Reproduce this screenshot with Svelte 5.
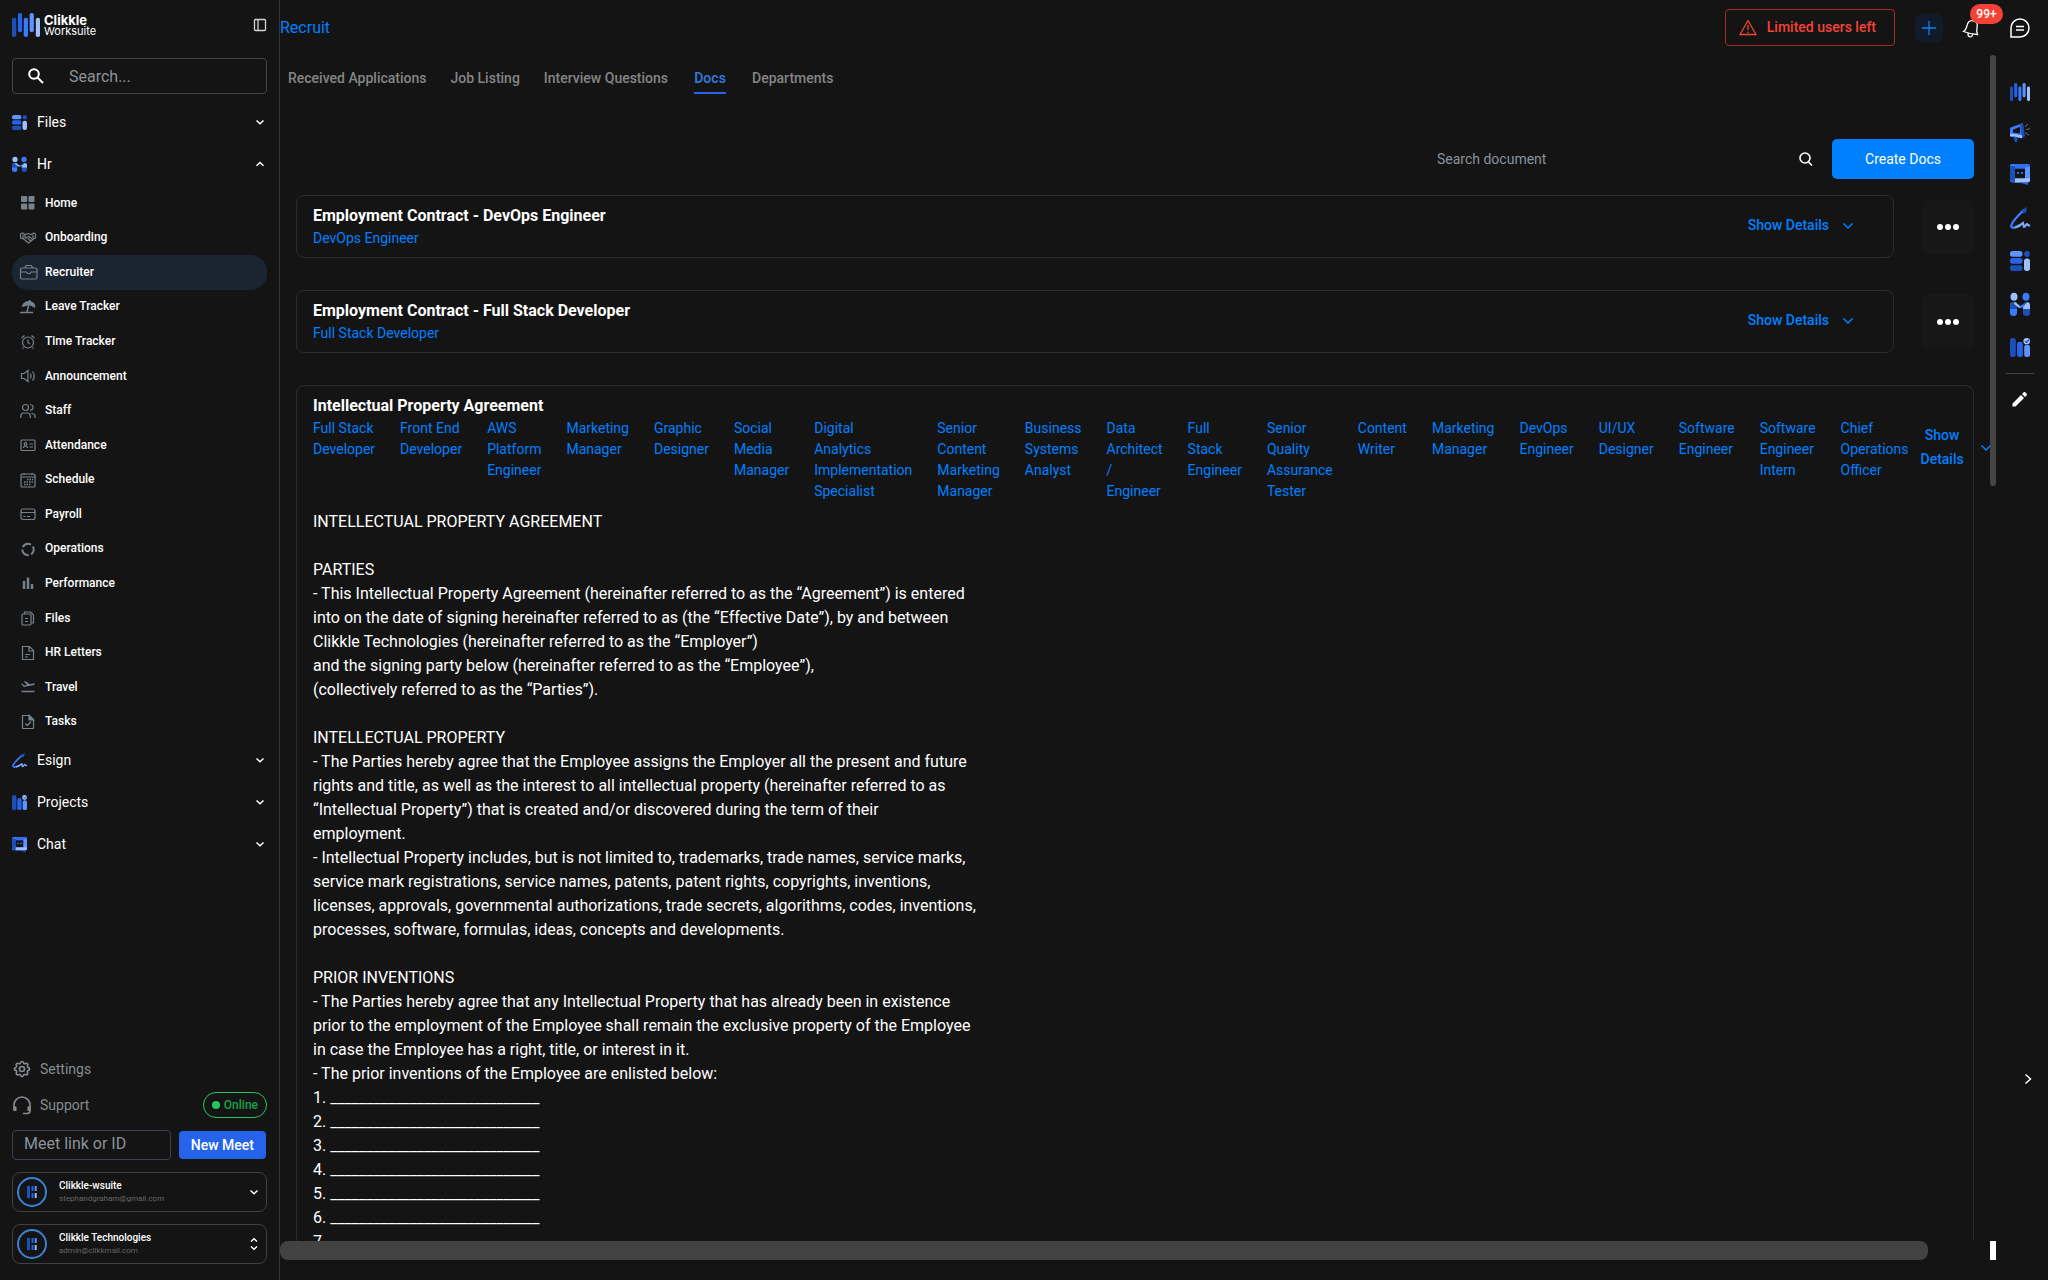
<script>
  const hrItems = [
    ['Home', 'home'], ['Onboarding', 'handshake'], ['Recruiter', 'case'], ['Leave Tracker', 'beach'],
    ['Time Tracker', 'alarm'], ['Announcement', 'speaker'], ['Staff', 'users'], ['Attendance', 'idcard'],
    ['Schedule', 'calendar'], ['Payroll', 'card'], ['Operations', 'ring'], ['Performance', 'bars'],
    ['Files', 'files'], ['HR Letters', 'letter'], ['Travel', 'plane'], ['Tasks', 'task'],
  ];
  const lowerGroups = [['Esign', 'esign'], ['Projects', 'projects'], ['Chat', 'chat']];
  const tabs = ['Received Applications', 'Job Listing', 'Interview Questions', 'Docs', 'Departments'];
  const docs = [
    ['Employment Contract - DevOps Engineer', 'DevOps Engineer'],
    ['Employment Contract - Full Stack Developer', 'Full Stack Developer'],
  ];
  const roles = [
    'Full\u00a0Stack Developer', 'Front\u00a0End Developer', 'AWS Platform Engineer', 'Marketing Manager',
    'Graphic Designer', 'Social Media Manager', 'Digital Analytics Implementation Specialist',
    'Senior Content Marketing Manager', 'Business Systems Analyst', 'Data Architect / Engineer',
    'Full Stack Engineer', 'Senior Quality Assurance Tester', 'Content Writer', 'Marketing Manager',
    'DevOps Engineer', 'UI/UX Designer', 'Software Engineer', 'Software Engineer Intern',
    'Chief Operations Officer',
  ];
  const apps = [
    ['Worksuite', 'logo', 18], ['Campaigns', 'megaphone', 19], ['Chat', 'chat', 21], ['Esign', 'esign', 22],
    ['Files', 'stack', 20], ['Hr', 'hr', 23], ['Projects', 'projects', 19],
  ];
  const accounts = [
    ['Clikkle-wsuite', 'stephandgraham@gmail.com', 'down'],
    ['Clikkle Technologies', 'admin@clikkmail.com', 'updown'],
  ];
  const blank = '_'.repeat(29);
  const agreement = `INTELLECTUAL PROPERTY AGREEMENT

PARTIES
- This Intellectual Property Agreement (hereinafter referred to as the “Agreement”) is entered
into on the date of signing hereinafter referred to as (the “Effective Date”), by and between
Clikkle Technologies (hereinafter referred to as the “Employer”)
and the signing party below (hereinafter referred to as the “Employee”),
(collectively referred to as the “Parties”).

INTELLECTUAL PROPERTY
- The Parties hereby agree that the Employee assigns the Employer all the present and future
rights and title, as well as the interest to all intellectual property (hereinafter referred to as
“Intellectual Property”) that is created and/or discovered during the term of their
employment.
- Intellectual Property includes, but is not limited to, trademarks, trade names, service marks,
service mark registrations, service names, patents, patent rights, copyrights, inventions,
licenses, approvals, governmental authorizations, trade secrets, algorithms, codes, inventions,
processes, software, formulas, ideas, concepts and developments.

PRIOR INVENTIONS
- The Parties hereby agree that any Intellectual Property that has already been in existence
prior to the employment of the Employee shall remain the exclusive property of the Employee
in case the Employee has a right, title, or interest in it.
- The prior inventions of the Employee are enlisted below:
${[1, 2, 3, 4, 5, 6, 7, 8].map((n) => `${n}. ${blank}`).join('\n')}`;
</script>

{#snippet brand(name, w, h)}
  <svg width={w} height={h} viewBox="0 0 20 20" preserveAspectRatio="none" aria-hidden="true">
    {#if name === 'logo'}
      <rect x="0" y="4" width="3" height="16" rx="1.5" fill="#1d4fb8" />
      <rect x="4.2" y="0" width="3" height="16" rx="1.5" fill="#2563eb" />
      <rect x="8.4" y="4" width="3" height="16" rx="1.5" fill="#3b7bff" />
      <rect x="12.6" y="0" width="3" height="16" rx="1.5" fill="#5e94ff" />
      <rect x="17" y="4" width="3" height="16" rx="1.5" fill="#9fc0ff" />
    {:else if name === 'megaphone'}
      <path d="M0 5L13 0v15L0 14z" fill="#3b7bff" />
      <path d="M10 1l3-1 2 14-3 2z" fill="#1d4fb8" />
      <path d="M0 11l12 2v3L0 14z" fill="#9fc0ff" />
      <path d="M3 7l7-3v7L3 10z" fill="#141414" />
      <path d="M3 14l5 1-1 5H5z" fill="#1d4fb8" />
      <path d="M15 4l3-3M16 7l4-1M15 10l4 3" stroke="#63708a" stroke-width="1" />
    {:else if name === 'chat'}
      <rect width="20" height="17.5" rx="2" fill="#3b7bff" />
      <path d="M0 2h5v15H2l-2-2z" fill="#1d4fb8" />
      <path d="M5 0h13l2 2v3H5z" fill="#2f6df2" />
      <path d="M15 3h5v14h-5z" fill="#5e94ff" />
      <path d="M5 13.5h15v2L18 17.5H5z" fill="#9fc0ff" />
      <path d="M9 17.5h9V20z" fill="#2563eb" />
      <rect x="5" y="4.5" width="10" height="9" fill="#141414" />
      <path d="M7 8.500h2M11 8.500h2" stroke="#3b7bff" stroke-width="1.600" />
    {:else if name === 'esign'}
      <path d="M14 2.500C8 8 2 13 1.200 17c0 3 5 1.800 9-.500" fill="none" stroke="#3b7bff" stroke-width="2.200" />
      <path d="M12 3l5-3-1 5-3 1z" fill="#1d4fb8" />
      <path d="M5 18.500c4-.500 6-3 8-4l1 3.500c2 0 2-3 3-2.500s1 2 3 1" fill="none" stroke="#82acff" stroke-width="2" />
    {:else if name === 'stack'}
      <rect width="12.500" height="5.800" rx="2.500" fill="#5e94ff" />
      <rect y="7" width="12.500" height="5.800" rx="2.500" fill="#2563eb" />
      <rect y="14.200" width="12.500" height="5.800" rx="2.500" fill="#1d4fb8" />
      <circle cx="17" cy="3" r="2.900" fill="#1d4fb8" />
      <rect x="14" y="7.500" width="6" height="12.500" rx="2.700" fill="#9fc0ff" />
    {:else if name === 'hr'}
      <circle cx="4" cy="3.300" r="3.500" fill="#9fc0ff" />
      <circle cx="16" cy="3.300" r="3.500" fill="#3b7bff" />
      <rect x="0" y="8" width="7" height="12" rx="3" fill="#3b7bff" />
      <path d="M0 14v-4q0-2 3-2l4 4v2z" fill="#1d4fb8" />
      <rect x="13" y="8" width="7" height="12" rx="3" fill="#1d4fb8" />
      <path d="M13 14v-2l4-4q3 0 3 3v3z" fill="#9fc0ff" />
      <path d="M4.500 8.500l5.500 4" stroke="#9fc0ff" stroke-width="2" />
      <path d="M10 12.500l4-2" stroke="#3b7bff" stroke-width="2" />
    {:else if name === 'projects'}
      <rect width="5.800" height="20" rx="2.500" fill="#1d4fb8" />
      <rect x="7" y="4" width="5.800" height="16" rx="2.500" fill="#2563eb" />
      <rect x="14.200" y="7" width="5.800" height="13" rx="2.500" fill="#5e94ff" />
      <circle cx="16.700" cy="3.300" r="3.300" fill="#9fc0ff" />
      <path d="M15 3.200l1.500 1.500 2.500-3" fill="none" stroke="#1d4fb8" stroke-width="1.200" />
    {/if}
  </svg>
{/snippet}

{#snippet glyph(name)}
  <svg class="glyph" width="16" height="16" viewBox="0 0 16 16" fill="none" stroke="currentColor" stroke-width="1.2" aria-hidden="true">
    {#if name === 'home'}
      <g fill="currentColor" stroke="none"><rect x="1" y="1" width="6.200" height="6" rx="1" /><rect x="8.500" y="1" width="6" height="6" rx="1" /><rect x="1" y="8.500" width="6.200" height="6" rx="1" /><rect x="8.500" y="8.500" width="6" height="6" rx="1" /></g>
    {:else if name === 'handshake'}
      <path d="M.5 4l2-1 2 1.500L8 3.500l3.500 1L13.500 3l2 1v4l-2 1-5 4-5-4-3-1z M5 5v3c2 1 3-2 4-1.500L12 9 M5 10l2 2M8 8.500l2.500 2.500M3 5v3.500M13 5v3.500" />
    {:else if name === 'case'}
      <rect x=".5" y="4" width="16.500" height="11" rx="1.500" /><path d="M5 4l1-2.500h5.500l1 2.500M.5 8h6l1 1.500h2.500l1-1.500h6" />
    {:else if name === 'beach'}
      <path d="M2 8C2 4 6 1.500 10 2c4 1 6 4 5 7l-3.500-2-3-1L6 7z" fill="currentColor" stroke="none" /><path d="M10 1L7 13M0 13.500h13" stroke-width="1.500" />
    {:else if name === 'alarm'}
      <circle cx="8" cy="8.500" r="5.500" /><path d="M8 5.500v3.200L10 10M1.500 4l3-2.500M14.500 4l-3-2.500M3.500 13.500l-1 1M12.500 13.500l1 1" />
    {:else if name === 'speaker'}
      <path d="M1.500 5.500h2.500L8 2.500v11l-4-3H1.500zM10.500 5.500q1.500 2.500 0 5M12.500 3.500q3.500 4.500 0 9" />
    {:else if name === 'users'}
      <circle cx="5.500" cy="4.500" r="3" /><path d="M.8 15v-2q0-3 3-3h3.500q3 0 3 3v2M10 1.500q3.500.500 3 3.500-.500 2-3 2.500M11.500 10.500q3.500 0 3.500 3V15" />
    {:else if name === 'idcard'}
      <rect x="1" y="3" width="14" height="10.500" rx="1" /><circle cx="5.500" cy="7" r="1.300" /><path d="M3.500 11q0-2 2-2t2 2M9.500 7h3.500M9.500 10h3.500" />
    {:else if name === 'calendar'}
      <rect x="1" y="2" width="14" height="13" rx="1" /><path d="M1 5h14M4 1v2M12 1v2" /><path d="M7 7.500h6M4 10h9M4 12.500h7" stroke-dasharray="1.500 1" stroke-width="1.500" />
    {:else if name === 'card'}
      <rect x="1" y="3" width="14" height="10.500" rx="2" /><path d="M1 6.500h14M3.500 10.500h2M7 10.500h3" />
    {:else if name === 'ring'}
      <circle cx="8" cy="8.500" r="5.700" stroke-width="2" stroke-dasharray="9.500 2.430" stroke-dashoffset="4" />
    {:else if name === 'bars'}
      <path d="M4 6v8M8 2.500V14M12 9v5" stroke-width="2.500" />
    {:else if name === 'files'}
      <rect x="2" y="4" width="9" height="11" rx="1" /><path d="M4.500 4V2h6L13.500 5v8h-2M5 8.500h3M5 11.500h3" />
    {:else if name === 'letter'}
      <path d="M2.500 1.500h7l4 4v9h-11zM9 1.500v4.500h4.500M5 9.500h5M5 12h3" />
    {:else if name === 'plane'}
      <path d="M1 5l3 3 10-2c2-1 0-2-1-1.500l-3 .800L5 2 4 2.500l3 3.500-2.500.500L2 4.500z" fill="currentColor" stroke="none" /><path d="M1.500 12.500h13" stroke-width="1.500" />
    {:else if name === 'task'}
      <path d="M2.500 1.500h7l4 4v9h-11zM5.500 9.500l2 2 3.500-4" /><path d="M9 1.500v4.500h4.500z" fill="currentColor" />
    {/if}
  </svg>
{/snippet}

{#snippet chevron(dir)}
  <svg width="12" height="12" viewBox="0 0 12 12" fill="none" stroke="currentColor" stroke-width="1.500" aria-hidden="true">
    {#if dir === 'down'}<path d="M2.500 4.500L6 7.800l3.500-3.300" />
    {:else if dir === 'down-wide'}<path d="M1.500 4.500L6 9l4.500-4.500" />
    {:else if dir === 'up'}<path d="M2.500 7.800L6 4.500l3.500 3.300" />
    {:else if dir === 'right'}<path d="M3.500 1.500L8.500 6l-5 4.500" />
    {:else}<path d="M3 3.500L6 .800l3 2.700M3 8.500l3 2.700 3-2.700" />{/if}
  </svg>
{/snippet}

{#snippet group(label, icon, open)}
  <button class="group" aria-expanded={open}>
    {@render brand(icon, 15, 15)}
    <span>{label}</span>
    {@render chevron(open ? 'up' : 'down')}
  </button>
{/snippet}

<div class="app">
  <aside>
    <div class="top">
      <div class="logo">
        {@render brand('logo', 28, 24)}
        <div class="wordmark"><b>Clikkle</b><span>Worksuite</span></div>
      </div>
      <button class="plain" aria-label="Toggle sidebar">
        <svg width="14" height="14" viewBox="0 0 14 14" fill="none" stroke="#d4d4d4" stroke-width="1.300"><rect x="1.500" y="1.500" width="11" height="11" rx="1" /><path d="M5 1.500v11" /></svg>
      </button>
    </div>
    <label class="search">
      <svg width="18" height="18" viewBox="0 0 18 18" fill="none" stroke="#fff" stroke-width="2" aria-hidden="true"><circle cx="7" cy="7" r="4.800" /><path d="M10.500 10.500l5.500 5.500" /></svg>
      <input type="search" placeholder="Search..." aria-label="Search" />
    </label>
    <nav aria-label="Apps">
      {@render group('Files', 'stack', false)}
      {@render group('Hr', 'hr', true)}
      <ul>
        {#each hrItems as [label, icon]}
          <li><a href="#{icon}" class:active={label === 'Recruiter'}>{@render glyph(icon)}{label}</a></li>
        {/each}
      </ul>
      {#each lowerGroups as [label, icon]}
        {@render group(label, icon, false)}
      {/each}
    </nav>
    <div class="bottom">
      <a class="util settings" href="#settings">
        <svg width="20" height="20" viewBox="0 0 24 24" fill="none" stroke="currentColor" stroke-width="2"><path d="M10.300 4.300c.400-1.800 3-1.800 3.400 0a1.700 1.700 0 0 0 2.600 1.100c1.500-.900 3.300.800 2.400 2.400a1.700 1.700 0 0 0 1 2.500c1.800.400 1.800 3 0 3.400a1.700 1.700 0 0 0-1 2.600c.900 1.500-.900 3.300-2.400 2.400a1.700 1.700 0 0 0-2.600 1c-.400 1.800-3 1.800-3.400 0a1.700 1.700 0 0 0-2.600-1c-1.500.900-3.300-.900-2.400-2.400a1.700 1.700 0 0 0-1-2.600c-1.800-.400-1.800-3 0-3.400a1.700 1.700 0 0 0 1-2.500c-.900-1.600.900-3.300 2.400-2.400 1 .600 2.300.100 2.600-1.100z" /><circle cx="12" cy="12" r="3" /></svg>
        Settings
      </a>
      <div class="support">
        <a class="util" href="#support">
          <svg width="20" height="20" viewBox="0 0 20 20" fill="none" stroke="currentColor" stroke-width="1.600"><path d="M2 15V10a8 8 0 0 1 16 0v6q0 2.500-3 2.500h-4" /><path d="M3 11.500v4.500M17 11.500v4.500" stroke-width="3" /></svg>
          Support
        </a>
        <span class="online"><i></i>Online</span>
      </div>
      <div class="meet">
        <input type="text" placeholder="Meet link or ID" aria-label="Meet link or ID" />
        <button>New Meet</button>
      </div>
      {#each accounts as [name, mail, dir]}
        <button class="account">
          <span class="avatar">
            <svg width="10" height="12" viewBox="0 0 10 12"><path d="M1.500 0v12" stroke="#1d4fb8" stroke-width="3" /><path d="M5.500 0v5M5.500 7v5" stroke="#2563eb" stroke-width="2" /><path d="M8.700 0v5" stroke="#5e94ff" stroke-width="2" /><path d="M8.700 7v5" stroke="#9fc0ff" stroke-width="2" /></svg>
          </span>
          <span class="who"><b>{name}</b><small>{mail}</small></span>
          {@render chevron(dir)}
        </button>
      {/each}
    </div>
  </aside>

  <div class="main">
    <header>
      <a class="crumb" href="#recruit">Recruit</a>
      <button class="limit">
        <svg width="18" height="17" viewBox="0 0 18 17" fill="none" stroke="currentColor" stroke-width="1.300"><path d="M9 1.500L1 15.500h16zM9 6v5M9 12.500v1.500" /></svg>
        Limited users left
      </button>
      <button class="plus" aria-label="Add"><svg width="16" height="16" viewBox="0 0 16 16" stroke="#0a80ff" stroke-width="1.300"><path d="M8 1v14M1 8h14" /></svg></button>
      <button class="plain bell" aria-label="Notifications">
        <svg width="18" height="20" viewBox="0 0 18 20" fill="none" stroke="#fff" stroke-width="1.300"><path d="M1.500 13.500Q4 12 4.800 8.500 6 2 11 2.800q5.500 1 4 6.700-.800 3.500.500 7-7-.300-14-3zM6 15.500q-.300 3 2 3.300 2 .200 2.800-2.200" /></svg>
        <span class="badge">99+</span>
      </button>
      <button class="plain" aria-label="Messages">
        <svg width="20" height="20" viewBox="0 0 20 20" fill="none" stroke="#fff" stroke-width="1.500"><path d="M1 19v-9a9 9 0 1 1 9 9zM6 8.500h8M6 12h8" /></svg>
      </button>
    </header>

    <div class="body">
      <div class="scroller">
        <nav class="tabs" aria-label="Recruit sections">
          {#each tabs as tab}
            <a href="#{tab}" class:current={tab === 'Docs'}><span>{tab}</span></a>
          {/each}
        </nav>
        <main>
          <div class="tools">
            <div class="find">
              <input type="search" placeholder="Search document" aria-label="Search document" />
              <button class="plain" aria-label="Find"><svg width="16" height="16" viewBox="0 0 16 16" fill="none" stroke="#fff" stroke-width="1.600"><circle cx="7" cy="7" r="5" /><path d="M10.500 11l3.500 3.500" /></svg></button>
            </div>
            <button class="create">Create Docs</button>
          </div>
          {#each docs as [title, role]}
            <div class="row">
              <section class="card">
                <div>
                  <h2>{title}</h2>
                  <p class="role">{role}</p>
                </div>
                <button class="details">Show Details {@render chevron('down-wide')}</button>
              </section>
              <button class="more" aria-label="More actions"><i></i><i></i><i></i></button>
            </div>
          {/each}
          <section class="card tall">
            <div class="summary">
              <div>
                <h2>Intellectual Property Agreement</h2>
                <ul class="roles">
                  {#each roles as role}<li class="role">{role}</li>{/each}
                </ul>
              </div>
              <button class="details stacked"><span>Show Details</span> {@render chevron('down-wide')}</button>
            </div>
            <div class="agreement">{agreement}</div>
          </section>
        </main>
      </div>
      <div class="vbar"><i></i></div>
      <aside class="rail" aria-label="App launcher">
        {#each apps as [label, icon, h]}
          <a href="#{icon}" aria-label={label}>{@render brand(icon, 20, h)}</a>
        {/each}
        <hr />
        <button class="plain" aria-label="Edit"><svg width="18" height="18" viewBox="0 0 18 18" fill="#fff"><path d="M1.500 13.500v3h3l8.500-8.500-3-3zM11 4l3 3 1.700-1.700q.800-.800 0-1.500l-1.500-1.500q-.700-.700-1.500 0z" /></svg></button>
        <button class="plain collapse" aria-label="Collapse">{@render chevron('right')}</button>
      </aside>
    </div>
    <div class="hbar"><span><i></i></span><b></b></div>
  </div>
</div>

<style>
  :global(body) { background: #141414; }
  :global(*) { box-sizing: border-box; }
  .app {
    display: grid;
    grid-template-columns: 280px minmax(0, 1fr);
    height: 100vh;
    overflow: hidden;
    background: #141414;
    color: #fff;
    font: 14px/21px Roboto, sans-serif;
  }
  svg { flex: none; display: block; overflow: visible; }
  button, input { font: inherit; color: inherit; background: none; border: 0; padding: 0; margin: 0; min-width: 0; outline: 0; }
  input::placeholder { color: #8b929a; opacity: 1; }
  a { color: inherit; text-decoration: none; }
  ul { list-style: none; margin: 0; padding: 0; }
  h2, p { margin: 0; }

  .app > aside {
    display: flex;
    flex-direction: column;
    padding: 0 12px 16px;
    border-right: 1px solid #343434;
  }
  .top { display: flex; align-items: center; justify-content: space-between; height: 50px; flex: none; }
  .logo { display: flex; align-items: center; gap: 4px; }
  .wordmark { display: flex; flex-direction: column; padding-top: 2px; font: 11px/11px Inter, sans-serif; }
  .wordmark b { font-size: 13px; }
  .search {
    display: flex;
    align-items: center;
    gap: 24px;
    height: 36px;
    margin: 8px 0 7px;
    padding: 0 14px;
    border: 1px solid #454545;
    border-radius: 4px;
    font-size: 16px;
    flex: none;
  }
  .search input { flex: 1; }
  .group { display: flex; align-items: center; gap: 10px; width: 100%; height: 42px; padding-right: 1px; text-align: left; }
  .group span { flex: 1; }
  nav ul { display: grid; grid-auto-rows: 1fr; min-height: 554px; padding-top: 1px; }
  nav li { display: flex; }
  nav li a { flex: 1; display: flex; align-items: center; gap: 9px; padding: 0 8px; border-radius: 16px; font-size: 12px; font-weight: 500; }
  nav li a.active { background: #1b2532; }
  .glyph { color: #78828c; }

  .bottom { display: flex; flex-direction: column; gap: 12px; margin-top: auto; color: #858b91; }
  .util { display: flex; align-items: center; gap: 8px; height: 24px; }
  .settings { margin-bottom: -1px; }
  .support { display: flex; justify-content: space-between; align-items: center; height: 26px; }
  .online {
    display: flex;
    align-items: center;
    gap: 4px;
    height: 26px;
    padding: 0 8px;
    border: 1px solid #22c55e;
    border-radius: 13px;
    color: #16a34a;
    font-size: 12px;
    font-weight: 500;
  }
  .online i { width: 8px; height: 8px; border-radius: 50%; background: #22c55e; }
  .meet { display: flex; align-items: center; gap: 8px; padding-right: 1px; }
  .meet input { flex: 1; height: 30px; padding: 0 11px 3px; border: 1px solid #374151; border-radius: 4px; font-size: 16px; }
  .meet button { height: 28px; padding: 0 12px; border-radius: 4px; background: #2563eb; color: #fff; font-weight: 500; }
  .account { display: flex; align-items: center; gap: 12px; height: 40px; padding: 0 6px 0 4px; border: 1px solid #404040; border-radius: 8px; text-align: left; color: #fff; }
  .avatar { display: grid; place-items: center; width: 30px; height: 30px; border: 2px solid #3b82d6; border-radius: 50%; }
  .who { flex: 1; display: flex; flex-direction: column; font-size: 10px; line-height: 13px; }
  .who b { font-weight: 500; }
  .who small { color: #666; font-size: 8px; }

  .main { display: flex; flex-direction: column; min-width: 0; min-height: 0; padding-bottom: 20px; }
  header { display: flex; align-items: center; height: 55px; flex: none; padding-right: 18px; }
  .crumb { flex: 1; color: #0080ff; font-size: 16px; }
  .limit { display: flex; align-items: center; gap: 10px; height: 37px; padding: 0 18px 0 13px; margin-right: 20px; border: 1px solid #a32b25; border-radius: 4px; color: #f44336; font-weight: 500; }
  .plus { display: grid; place-items: center; width: 28px; height: 28px; margin-right: 19px; border-radius: 6px; background: #101c29; }
  .plain { display: grid; place-items: center; }
  .bell { position: relative; margin-right: 30px; }
  .badge { position: absolute; left: 8px; bottom: 14px; width: 33px; height: 20px; border-radius: 10px; background: #f44336; font-size: 12px; line-height: 20px; font-weight: 500; }
  .body { flex: 1; display: flex; min-height: 0; }
  .scroller { flex: 1; min-width: 0; overflow: hidden; }
  .tabs { display: flex; height: 40px; padding-left: -4px; font-weight: 500; color: #858585; }
  .tabs a { min-width: 60px; padding: 13px 12px 0; text-align: center; }
  .tabs a:first-child { padding-left: 8px; }
  .tabs span { display: inline-block; height: 26px; }
  .tabs .current { color: #2f7de1; }
  .tabs .current span { border-bottom: 2px solid #2563eb; }

  main { padding: 44px 16px 0; }
  .tools { display: flex; justify-content: flex-end; margin-bottom: 16px; }
  .find { display: flex; align-items: center; width: 409px; padding: 0 18px 0 14px; }
  .find input { flex: 1; }
  .create { width: 142px; height: 40px; border-radius: 5px; background: #0080ff; }
  .row { display: flex; align-items: center; gap: 28px; margin-bottom: 32px; }
  .card { flex: 1; display: flex; justify-content: space-between; align-items: center; padding: 8px 39px 8px 16px; border: 1px solid #2c2c2c; border-radius: 8px; }
  h2 { font-size: 16px; line-height: 24px; font-weight: 700; }
  .role { color: #0080ff; }
  .details { display: flex; align-items: center; gap: 13px; padding-bottom: 3px; color: #0080ff; font-weight: 500; line-height: 24px; }
  .more { display: flex; align-items: center; justify-content: center; gap: 2px; width: 52px; height: 55px; border-radius: 6px; background: #171717; }
  .more i { width: 6px; height: 6px; border-radius: 50%; background: #fff; }
  .tall { display: block; padding: 8px 16px; }
  .summary { display: flex; align-items: center; gap: 12px; }
  .roles { display: flex; gap: 25px; min-height: 0; padding-top: 0; }
  .roles li { width: min-content; flex: none; }
  .stacked { gap: 16px; }
  .stacked span { width: min-content; text-align: center; }
  .agreement { margin-top: 8px; font-size: 16px; line-height: 24px; white-space: pre-wrap; }

  .vbar { width: 6px; flex: none; }
  .vbar i { position: relative; z-index: 1; display: block; height: 36.3%; border-radius: 3px; background: #454545; }
  .rail { width: 52px; flex: none; display: flex; flex-direction: column; align-items: center; gap: 22px; padding: 28px 4px 156px 0; }
  .rail hr { width: 28px; margin: -6px 0; border: 0; border-top: 1px solid #454545; }
  .collapse { margin: auto 0 0 16px; }
  .hbar { display: flex; height: 19px; flex: none; padding-right: 52px; }
  .hbar span { flex: 1; }
  .hbar i { display: block; width: 96.4%; height: 19px; border-radius: 8px; background: #424242; }
  .hbar b { width: 6px; background: #fff; }
</style>
